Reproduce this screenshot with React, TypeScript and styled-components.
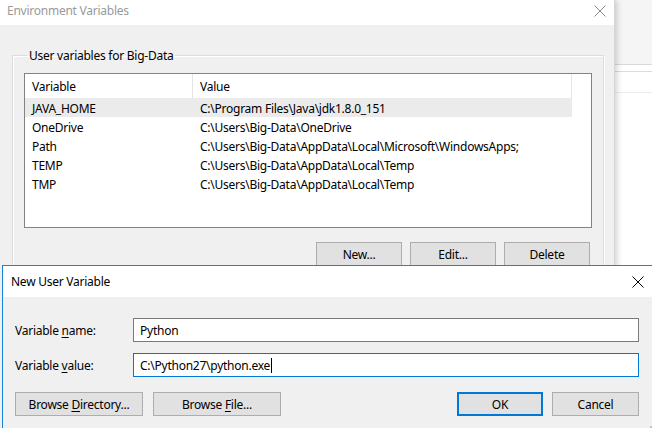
import React from "react";
import styled, { createGlobalStyle, css } from "styled-components";

const Global = createGlobalStyle`
  html, body { margin: 0; padding: 0; }
  body {
    font-family: "Noto Sans", "Open Sans", sans-serif;
    font-size: 12px;
    color: #000;
    background: #ffffff;
  }
`;

const Desktop = styled.div`
  position: relative;
  width: 652px;
  height: 428px;
  overflow: hidden;
  display: flex;
  background: #ffffff;
`;

/* ---------- Back window: Environment Variables ---------- */
const EnvWindow = styled.section`
  flex: 0 0 614px;
  display: flex;
  flex-direction: column;
  background: #f0f0f0;
  border-right: 1px solid #d6d6d6;
  box-shadow: 2px 0 6px rgba(0, 0, 0, 0.18);
  z-index: 1;
`;

const TitleBar = styled.header<{ $h: number; $active?: boolean; $lift?: number }>`
  height: ${(p) => p.$h}px;
  box-sizing: border-box;
  flex: 0 0 auto;
  background: #ffffff;
  display: flex;
  align-items: center;
  justify-content: space-between;
  padding-left: ${(p) => (p.$active ? 8 : 7)}px;
  padding-bottom: ${(p) => p.$lift ?? 0}px;
  color: ${(p) => (p.$active ? "#000" : "#9a9a9a")};
  font-size: 12px;
  letter-spacing: -0.25px;
`;

const CloseBtn = styled.span<{ $active?: boolean; $w: number }>`
  width: ${(p) => p.$w}px;
  height: 100%;
  display: flex;
  align-items: center;
  justify-content: center;
  color: ${(p) => (p.$active ? "#000" : "#8a8a8a")};
`;

const CloseIcon = ({ active, w }: { active?: boolean; w: number }) => (
  <CloseBtn $active={active} $w={w}>
    <svg width="12" height="12" viewBox="0 0 12 12">
      <path d="M0.5 0.5 L11.5 11.5 M11.5 0.5 L0.5 11.5" stroke="currentColor" strokeWidth="1" fill="none" />
    </svg>
  </CloseBtn>
);

const EnvBody = styled.div`
  flex: 1;
  padding: 22px 10px 0 12px;
`;

const Group = styled.fieldset`
  margin: 0;
  padding: 9px 11px 0 11px;
  height: 260px;
  border: 1px solid #dcdcdc;
  box-shadow: inset 1px 1px 0 #ffffff, 1px 1px 0 #ffffff;
  min-inline-size: 0;
`;

const Legend = styled.legend`
  padding: 0 1px 0 2px;
  margin-left: 3px;
  font-size: 12px;
  letter-spacing: -0.25px;
  color: #000;
`;

const ListBox = styled.div`
  height: 155px;
  box-sizing: border-box;
  border: 1px solid #828282;
  background: #ffffff;
`;

const Grid = styled.div`
  width: 547px;
  display: grid;
  grid-template-columns: 168px 379px;
`;

const Cell = styled.div<{ $header?: boolean; $selected?: boolean }>`
  height: ${(p) => (p.$header ? 24 : 19)}px;
  box-sizing: border-box;
  display: flex;
  align-items: center;
  padding-left: 7px;
  padding-top: ${(p) => (p.$header ? 0 : 2)}px;
  white-space: nowrap;
  letter-spacing: -0.25px;
  background: ${(p) => (p.$selected ? "#ebebeb" : "#ffffff")};
  ${(p) =>
    p.$header &&
    css`
      border-right: 1px solid #e5e5e5;
    `}
`;

const ButtonRow = styled.div`
  display: flex;
  justify-content: flex-end;
  gap: 8px;
  margin-top: 14px;
  padding-right: 2px;
`;

const WinButton = styled.button<{ $w: number; $default?: boolean }>`
  width: ${(p) => p.$w}px;
  height: 24px;
  box-sizing: border-box;
  margin: 0;
  padding: 0;
  font-family: inherit;
  font-size: 12px;
  letter-spacing: -0.25px;
  color: #000;
  background: #e1e1e1;
  border: ${(p) => (p.$default ? "2px solid #0078d7" : "1px solid #adadad")};
  border-radius: 0;
  u { text-decoration: underline; text-underline-offset: 2px; }
`;

/* ---------- App behind on the right ---------- */
const BehindApp = styled.div`
  flex: 1;
  display: flex;
  flex-direction: column;
  background: #ffffff;
`;

const BehindTop = styled.div`
  height: 64px;
  background: #f5f5f5;
  border-bottom: 1px solid #d9d9d9;
`;

const BehindBand = styled.div<{ $h: number; $line: string }>`
  height: ${(p) => p.$h}px;
  border-bottom: 1px solid ${(p) => p.$line};
`;

/* ---------- Front dialog: New User Variable ---------- */
const NewDialog = styled.section`
  position: absolute;
  left: 2px;
  top: 265px;
  width: 660px;
  height: 170px;
  box-sizing: border-box;
  display: flex;
  flex-direction: column;
  background: #f0f0f0;
  border: 1px solid #1883d7;
  z-index: 2;
`;

const FormBody = styled.div`
  position: relative;
  flex: 1;
  padding: 21px 0 0 12px;
`;

const FormGrid = styled.div`
  display: grid;
  grid-template-columns: 118px 506px;
  row-gap: 11px;
  align-items: center;
`;

const Label = styled.label`
  letter-spacing: -0.25px;
  u { text-decoration: underline; text-underline-offset: 2px; }
`;

const TextBox = styled.div<{ $focused?: boolean }>`
  height: 24px;
  box-sizing: border-box;
  border: 1px solid ${(p) => (p.$focused ? "#0078d7" : "#7a7a7a")};
  background: #ffffff;
  display: flex;
  align-items: center;
  padding-left: 6px;
  letter-spacing: -0.25px;
`;

const Caret = styled.span`
  display: inline-block;
  width: 1px;
  height: 15px;
  background: #000;
  margin-left: 1px;
`;

const DialogButtons = styled.div`
  display: flex;
  margin-top: 15px;
  width: 624px;
`;

const LeftGroup = styled.div`
  display: flex;
  gap: 10px;
  flex: 1;
`;

const RightGroup = styled.div`
  display: flex;
  gap: 9px;
`;

const Grip = styled.svg`
  position: absolute;
  right: 9px;
  bottom: 0px;
`;

const rows: [string, string][] = [
  ["JAVA_HOME", "C:\\Program Files\\Java\\jdk1.8.0_151"],
  ["OneDrive", "C:\\Users\\Big-Data\\OneDrive"],
  ["Path", "C:\\Users\\Big-Data\\AppData\\Local\\Microsoft\\WindowsApps;"],
  ["TEMP", "C:\\Users\\Big-Data\\AppData\\Local\\Temp"],
  ["TMP", "C:\\Users\\Big-Data\\AppData\\Local\\Temp"],
];

export default function App() {
  return (
    <>
      <Global />
      <Desktop>
        <EnvWindow>
          <TitleBar $h={25} $lift={4}>
            <span>Environment Variables</span>
            <CloseIcon w={28} />
          </TitleBar>
          <EnvBody>
            <Group>
              <Legend>User variables for Big-Data</Legend>
              <ListBox>
                <Grid>
                  <Cell $header>Variable</Cell>
                  <Cell $header>Value</Cell>
                  {rows.map(([k, v], i) => (
                    <React.Fragment key={k}>
                      <Cell $selected={i === 0}>{k}</Cell>
                      <Cell $selected={i === 0}>{v}</Cell>
                    </React.Fragment>
                  ))}
                </Grid>
              </ListBox>
              <ButtonRow>
                <WinButton $w={86}>New...</WinButton>
                <WinButton $w={86}>Edit...</WinButton>
                <WinButton $w={86}>Delete</WinButton>
              </ButtonRow>
            </Group>
          </EnvBody>
        </EnvWindow>
        <BehindApp>
          <BehindTop />
          <BehindBand $h={6} $line="#dcdcdc" />
          <BehindBand $h={20} $line="#ececec" />
        </BehindApp>

        <NewDialog>
          <TitleBar $h={31} $active>
            <span>New User Variable</span>
            <CloseIcon active w={46} />
          </TitleBar>
          <FormBody>
            <FormGrid>
              <Label>
                Variable <u>n</u>ame:
              </Label>
              <TextBox>Python</TextBox>
              <Label>
                Variable <u>v</u>alue:
              </Label>
              <TextBox $focused>
                C:\Python27\python.exe
                <Caret />
              </TextBox>
            </FormGrid>
            <DialogButtons>
              <LeftGroup>
                <WinButton $w={128}>
                  Browse <u>D</u>irectory...
                </WinButton>
                <WinButton $w={128}>
                  Browse <u>F</u>ile...
                </WinButton>
              </LeftGroup>
              <RightGroup>
                <WinButton $w={86} $default>
                  OK
                </WinButton>
                <WinButton $w={87}>Cancel</WinButton>
              </RightGroup>
            </DialogButtons>
            <Grip width="10" height="10" viewBox="0 0 10 10">
              {[
                [8, 2],
                [5, 5],
                [8, 5],
                [2, 8],
                [5, 8],
                [8, 8],
              ].map(([x, y]) => (
                <rect key={`${x}-${y}`} x={x} y={y} width="2" height="2" fill="#c4c4c4" />
              ))}
            </Grip>
          </FormBody>
        </NewDialog>
      </Desktop>
    </>
  );
}
